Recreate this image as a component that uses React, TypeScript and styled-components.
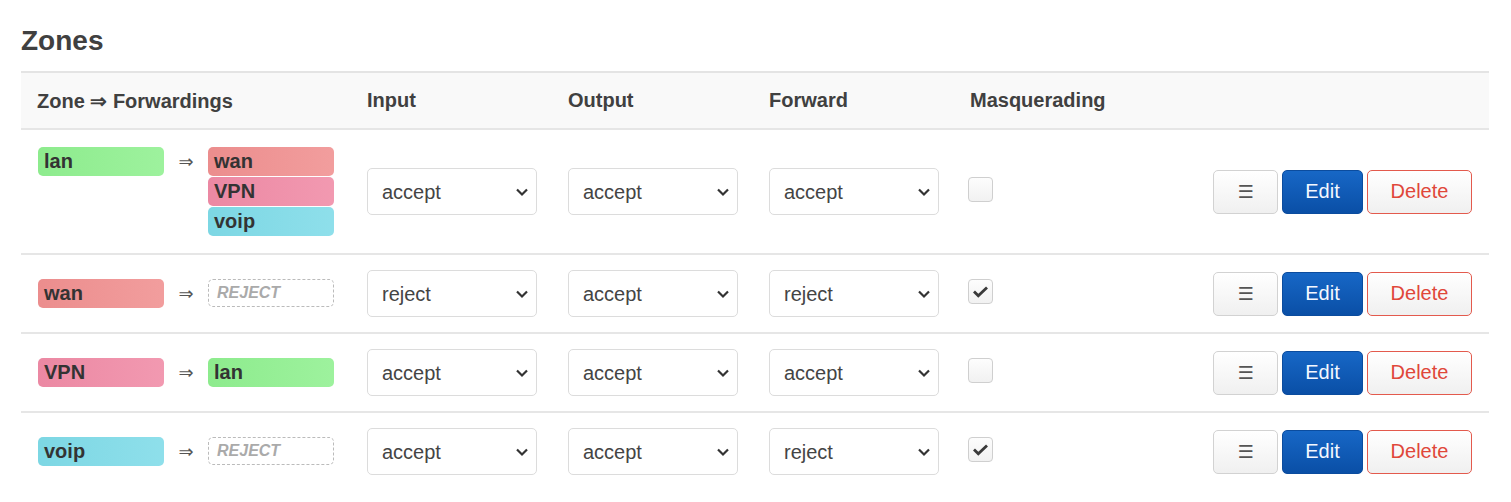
import styled, { createGlobalStyle } from "styled-components";

const Global = createGlobalStyle`
  html, body {
    margin: 0;
    padding: 0;
    background: #fff;
    font-family: "Liberation Sans", Arial, sans-serif;
    color: #404040;
  }
`;

/* ---------- page ---------- */

const Page = styled.div`
  padding: 25px 22px 0 21px;
`;

const Title = styled.h2`
  margin: 0 0 14px;
  font-size: 28px;
  font-weight: 700;
  line-height: 32px;
  color: #404040;
`;

/* ---------- table ---------- */

const Table = styled.div`
  display: flex;
  flex-direction: column;
  border-top: 2px solid #e4e4e4;
`;

const Row = styled.div<{ $head?: boolean }>`
  display: grid;
  grid-template-columns: 330px 201px 201px 201px 1fr auto;
  align-items: center;
  background: ${({ $head }) => ($head ? "#f9f9f9" : "#fff")};
  border-top: ${({ $head }) => ($head ? "none" : "2px solid #e6e6e6")};
  min-height: ${({ $head }) => ($head ? "55px" : "auto")};
`;

const Cell = styled.div<{ $head?: boolean }>`
  padding: ${({ $head }) => ($head ? "0 16px" : "15px 16px")};
  font-size: 20px;
  font-weight: ${({ $head }) => ($head ? 700 : 400)};
  color: #404040;
`;

const ZoneCell = styled(Cell)`
  display: flex;
  align-items: flex-start;
  padding: 17px 16px 17px 17px;
`;

const ActionCell = styled(Cell)`
  display: flex;
  gap: 4px;
  justify-content: flex-end;
  padding-right: 17px;
`;

/* ---------- zone badges ---------- */

const zoneColors: Record<string, string> = {
  lan: "#90f090",
  wan: "#f09090",
  VPN: "#f08ba6",
  voip: "#7fdbe8",
};

const Badge = styled.div<{ $zone: string }>`
  box-sizing: border-box;
  width: 126px;
  height: 29px;
  padding: 0 6px;
  border-radius: 5px;
  background-color: ${({ $zone }) => zoneColors[$zone]};
  background-image: linear-gradient(
    90deg,
    rgba(0, 0, 0, 0.02),
    rgba(255, 255, 255, 0.12)
  );
  font-size: 20px;
  font-weight: 700;
  line-height: 28px;
  color: #333;
`;

const RejectBadge = styled.div`
  box-sizing: border-box;
  width: 126px;
  height: 28px;
  padding: 0 8px;
  border: 1px dashed #bbb;
  border-radius: 5px;
  font-size: 16px;
  font-weight: 700;
  font-style: italic;
  line-height: 26px;
  color: #aaa;
`;

const Arrow = styled.span`
  width: 44px;
  text-align: center;
  font-size: 18px;
  line-height: 29px;
  color: #555;
  font-family: "DejaVu Sans", sans-serif;
`;

const Targets = styled.div`
  display: flex;
  flex-direction: column;
  gap: 1px;
`;

/* ---------- select ---------- */

const SelectWrap = styled.div`
  position: relative;
  width: 170px;
`;

const Select = styled.select`
  appearance: none;
  -webkit-appearance: none;
  box-sizing: border-box;
  width: 170px;
  height: 47px;
  padding: 0 34px 0 14px;
  border: 1px solid #dcdcdc;
  border-radius: 5px;
  background: #fff;
  font-family: "Liberation Sans", Arial, sans-serif;
  font-size: 20px;
  color: #444;
  outline: none;
`;

const Chevron = styled.svg`
  position: absolute;
  right: 8px;
  top: 19px;
  pointer-events: none;
`;

/* ---------- checkbox ---------- */

const Check = styled.span`
  box-sizing: border-box;
  display: flex;
  align-items: center;
  justify-content: center;
  width: 25px;
  height: 25px;
  margin: 0 0 4px -2px;
  border: 1px solid #cfcfcf;
  border-radius: 4px;
  background: linear-gradient(#fdfdfd, #f1f1f1);
`;

/* ---------- buttons ---------- */

const Btn = styled.button<{ $kind: "menu" | "edit" | "delete" }>`
  box-sizing: border-box;
  height: 44px;
  padding: 0;
  border-radius: 5px;
  font-family: "Liberation Sans", Arial, sans-serif;
  font-size: 20px;
  cursor: pointer;
  width: ${({ $kind }) =>
    $kind === "menu" ? "65px" : $kind === "edit" ? "81px" : "105px"};
  border: 1px solid
    ${({ $kind }) =>
      $kind === "menu" ? "#d2d2d2" : $kind === "edit" ? "#0b4c9e" : "#e35a4d"};
  background: ${({ $kind }) =>
    $kind === "edit"
      ? "linear-gradient(#1767c6, #0a4fa6)"
      : "linear-gradient(#ffffff, #f0f0f0)"};
  color: ${({ $kind }) =>
    $kind === "menu" ? "#555" : $kind === "edit" ? "#f4f8ff" : "#e0473a"};
`;

const MenuGlyph = styled.span`
  font-family: "DejaVu Sans", sans-serif;
  font-size: 18px;
`;

/* ---------- data ---------- */

type Zone = {
  name: string;
  targets: string[];
  input: string;
  output: string;
  forward: string;
  masq: boolean;
};

const zones: Zone[] = [
  { name: "lan", targets: ["wan", "VPN", "voip"], input: "accept", output: "accept", forward: "accept", masq: false },
  { name: "wan", targets: [], input: "reject", output: "accept", forward: "reject", masq: true },
  { name: "VPN", targets: ["lan"], input: "accept", output: "accept", forward: "accept", masq: false },
  { name: "voip", targets: [], input: "accept", output: "accept", forward: "reject", masq: true },
];

function Policy({ value }: { value: string }) {
  return (
    <SelectWrap>
      <Select defaultValue={value}>
        <option value="reject">reject</option>
        <option value="drop">drop</option>
        <option value="accept">accept</option>
      </Select>
      <Chevron width="14" height="10" viewBox="0 0 14 10">
        <path d="M2 2.5 L7 7.5 L12 2.5" fill="none" stroke="#333" strokeWidth="2.2" />
      </Chevron>
    </SelectWrap>
  );
}

export default function App() {
  return (
    <>
      <Global />
      <Page>
        <Title>Zones</Title>
        <Table>
          <Row $head>
            <Cell $head>Zone ⇒ Forwardings</Cell>
            <Cell $head>Input</Cell>
            <Cell $head>Output</Cell>
            <Cell $head>Forward</Cell>
            <Cell $head>Masquerading</Cell>
            <Cell $head />
          </Row>
          {zones.map((z) => (
            <Row key={z.name}>
              <ZoneCell>
                <Badge $zone={z.name}>{z.name}</Badge>
                <Arrow>⇒</Arrow>
                <Targets>
                  {z.targets.length ? (
                    z.targets.map((t) => (
                      <Badge key={t} $zone={t}>
                        {t}
                      </Badge>
                    ))
                  ) : (
                    <RejectBadge>REJECT</RejectBadge>
                  )}
                </Targets>
              </ZoneCell>
              <Cell>
                <Policy value={z.input} />
              </Cell>
              <Cell>
                <Policy value={z.output} />
              </Cell>
              <Cell>
                <Policy value={z.forward} />
              </Cell>
              <Cell>
                <Check>
                  {z.masq && (
                    <svg width="17" height="13" viewBox="0 0 17 13">
                      <path d="M2 6.5 L6.3 10.8 L15 2.5" fill="none" stroke="#3a3a3a" strokeWidth="2.8" />
                    </svg>
                  )}
                </Check>
              </Cell>
              <ActionCell>
                <Btn $kind="menu">
                  <MenuGlyph>☰</MenuGlyph>
                </Btn>
                <Btn $kind="edit">Edit</Btn>
                <Btn $kind="delete">Delete</Btn>
              </ActionCell>
            </Row>
          ))}
        </Table>
      </Page>
    </>
  );
}
